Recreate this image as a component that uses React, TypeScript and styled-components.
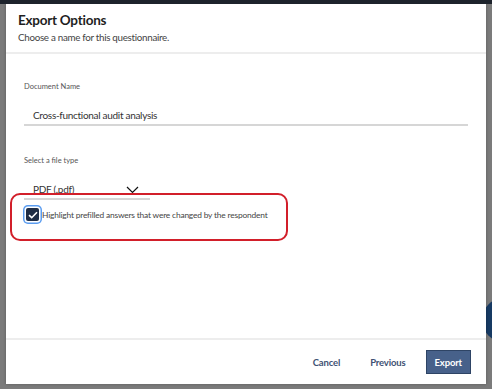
import styled, { createGlobalStyle } from "styled-components";

const GlobalStyle = createGlobalStyle`
  html, body {
    margin: 0;
    padding: 0;
    background: #7a7a7a;
    font-family: "Lato", "Liberation Sans", sans-serif;
  }
`;

const Page = styled.div`
  position: relative;
  width: 492px;
  height: 389px;
  overflow: hidden;
  background: #7b7b7b;
  border-top: solid 4px #1d232c;
  box-sizing: border-box;
  padding: 0 6px 5px 6px;
  display: flex;
`;

const BackdropCircle = styled.div`
  position: absolute;
  right: -34px;
  top: 294px;
  width: 44px;
  height: 44px;
  border-radius: 50%;
  background: #173a63;
`;

const Modal = styled.div`
  position: relative;
  z-index: 1;
  flex: 1;
  background: #fff;
  display: flex;
  flex-direction: column;
  box-shadow: 0 0 3px rgba(0, 0, 0, 0.25);
`;

const Header = styled.header`
  height: 50px;
  box-sizing: border-box;
  padding: 7px 12px 0 12px;
  border-bottom: solid 2px #ededed;

  h1 {
    margin: 0;
    font-size: 13.5px;
    line-height: 18px;
    letter-spacing: -0.25px;
    font-weight: 700;
    color: #1f1f1f;
  }

  p {
    margin: 1px 0 0 0;
    font-size: 9.8px;
    line-height: 14px;
    letter-spacing: -0.3px;
    color: #444;
  }
`;

const Body = styled.main`
  position: relative;
  flex: 1;
  padding: 28px 18px 0 18px;
`;

const Field = styled.div<{ $width?: number }>`
  display: flex;
  flex-direction: column;
  width: ${(p) => (p.$width ? `${p.$width}px` : "auto")};
  margin-bottom: ${(p) => (p.$width ? "8px" : "30px")};

  label {
    font-size: 7.5px;
    line-height: 10px;
    color: #555;
    margin-bottom: 14px;
  }
`;

const InputLine = styled.div`
  position: relative;
  display: flex;
  align-items: center;
  height: 17px;
  padding: 0 0 1px 9px;
  border-bottom: solid 2px #d6d6d6;
  font-size: 10px;
  letter-spacing: -0.3px;
  color: #333;
`;

const Chevron = styled.svg`
  position: absolute;
  right: 11px;
  top: 6px;
`;

const CheckRow = styled.label`
  display: flex;
  align-items: center;
  gap: 3px;
  font-size: 8.4px;
  letter-spacing: -0.18px;
  color: #444;
`;

const Box = styled.span`
  width: 13px;
  height: 13px;
  border-radius: 2px;
  background: #1f2d45;
  box-shadow: 0 0 0 1.5px #fff, 0 0 0 3px #5a9cf0;
  margin-left: 2px;
  display: flex;
  align-items: center;
  justify-content: center;
`;

const Highlight = styled.div`
  position: absolute;
  left: 4px;
  top: 139px;
  width: 278px;
  height: 48px;
  box-sizing: border-box;
  border: solid 2.5px #d21f2a;
  border-radius: 10px;
`;

const Footer = styled.footer`
  height: 46px;
  box-sizing: border-box;
  border-top: solid 2px #ededed;
  display: flex;
  align-items: center;
  justify-content: flex-end;
  padding-right: 15px;
`;

const Button = styled.button<{ $primary?: boolean }>`
  font-family: inherit;
  font-size: 9.5px;
  letter-spacing: -0.15px;
  font-weight: 700;
  height: 24px;
  padding: 0 ${(p) => (p.$primary ? "8px" : "0")};
  border: solid 1px ${(p) => (p.$primary ? "#2e4465" : "transparent")};
  background: ${(p) => (p.$primary ? "#47618a" : "transparent")};
  color: ${(p) => (p.$primary ? "#fff" : "#3f5274")};
  margin-left: ${(p) => (p.$primary ? "19px" : "28px")};
`;

export default function App() {
  return (
    <>
      <GlobalStyle />
      <Page>
        <BackdropCircle />
        <Modal>
          <Header>
            <h1>Export Options</h1>
            <p>Choose a name for this questionnaire.</p>
          </Header>
          <Body>
            <Field>
              <label>Document Name</label>
              <InputLine>Cross-functional audit analysis</InputLine>
            </Field>
            <Field $width={126}>
              <label>Select a file type</label>
              <InputLine>
                PDF (.pdf)
                <Chevron width="13" height="8" viewBox="0 0 13 8">
                  <path d="M1 1 L6.5 6.5 L12 1" fill="none" stroke="#111" strokeWidth="1.2" />
                </Chevron>
              </InputLine>
            </Field>
            <CheckRow>
              <Box>
                <svg width="10" height="8" viewBox="0 0 10 8">
                  <path d="M1 4.2 L3.7 6.7 L9 1.2" fill="none" stroke="#fff" strokeWidth="1.6" />
                </svg>
              </Box>
              Highlight prefilled answers that were changed by the respondent
            </CheckRow>
            <Highlight />
          </Body>
          <Footer>
            <Button>Cancel</Button>
            <Button>Previous</Button>
            <Button $primary>Export</Button>
          </Footer>
        </Modal>
      </Page>
    </>
  );
}
